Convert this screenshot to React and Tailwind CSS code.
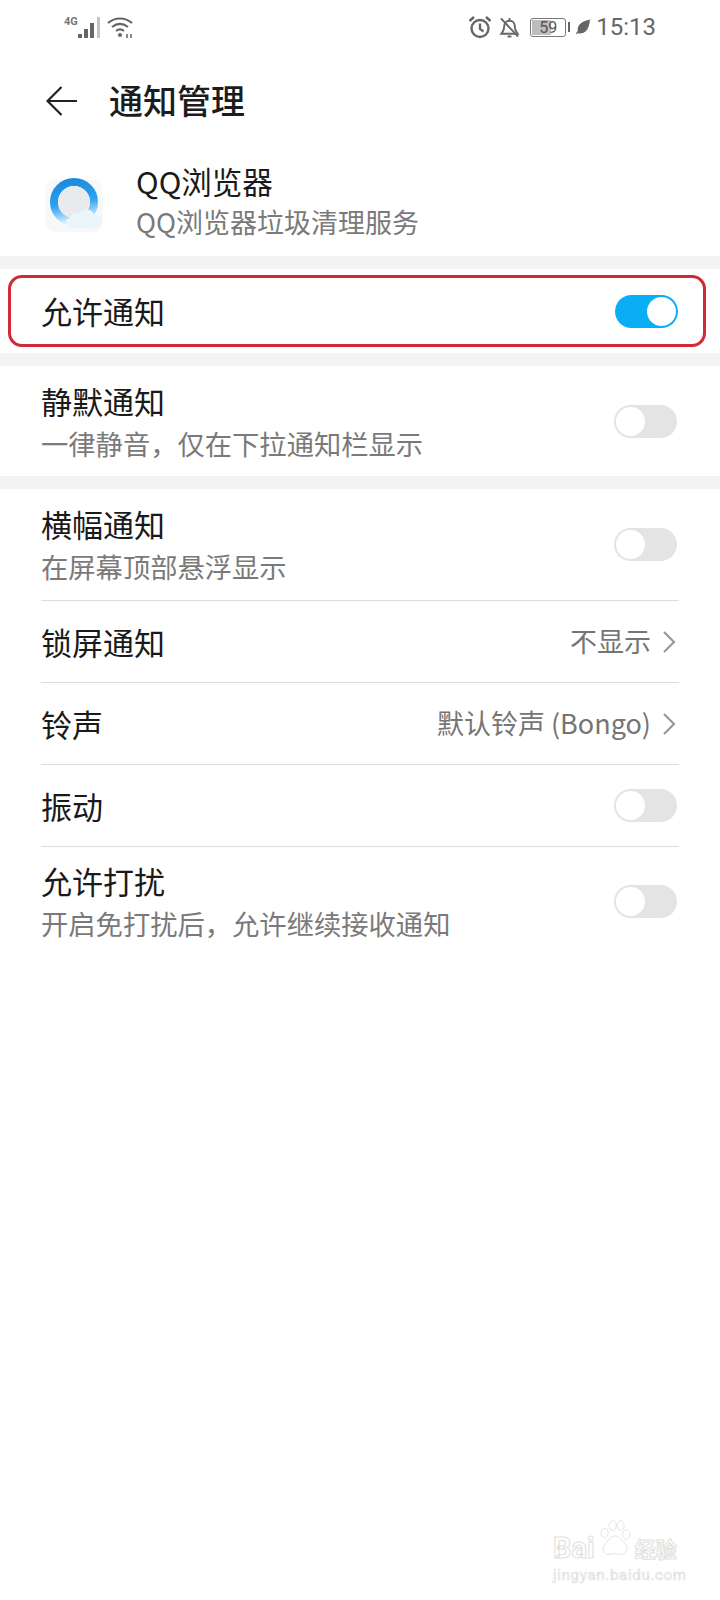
const FONT = { fontFamily: '"Noto Sans CJK SC", "Noto Sans", sans-serif' };

function Toggle({ on }) {
  return (
    <div
      className={`mr-[2px] flex h-[33px] w-[63px] shrink-0 items-center rounded-full p-[2px] ${
        on ? "justify-end bg-[#0aaef5]" : "justify-start bg-[#e4e4e4]"
      }`}
    >
      <div className="h-[29px] w-[29px] rounded-full bg-white" />
    </div>
  );
}

function Chevron() {
  return (
    <svg className="ml-[11px] mr-[3px] h-[24px] w-[14px]" viewBox="0 0 14 24" fill="none" stroke="#999999" strokeWidth="2.2">
      <path d="M2 2l10 10L2 22" />
    </svg>
  );
}

function Band() {
  return <div className="h-[13px] bg-[#f3f3f3]" />;
}

function Row({ title, sub, height, right, divider }) {
  return (
    <div className="pl-[41px] pr-[41px]">
      <div className={`flex items-center justify-between ${height} ${divider ? "border-b border-[#dcdcdc]" : ""}`}>
        <div>
          <div className="text-[31px] leading-[40px] text-[#1a1a1a]">{title}</div>
          {sub && <div className="mt-[3px] text-[27.3px] leading-[38px] text-[#7a7a7a]">{sub}</div>}
        </div>
        {right}
      </div>
    </div>
  );
}

function Value({ children }) {
  return (
    <div className="flex items-center text-[27px] text-[#757575]">
      {children}
      <Chevron />
    </div>
  );
}

function StatusBar() {
  return (
    <div className="flex h-[54px] items-center justify-between pl-[64px] pr-[64px] text-[#666666]">
      <div className="flex items-center">
        <span className="mb-[12px] text-[11px] font-bold leading-none text-[#777777]" style={{ fontFamily: "Roboto, sans-serif" }}>4G</span>
        <svg className="mt-[2px] h-[24px] w-[24px]" viewBox="0 0 24 24" fill="#666666">
          <rect x="0" y="18" width="4" height="4" />
          <rect x="6" y="13" width="4" height="9" />
          <rect x="12" y="7" width="4" height="15" />
          <rect x="19" y="1" width="3" height="21" fill="#c4c4c4" />
        </svg>
        <svg className="ml-[4px] h-[26px] w-[28px]" viewBox="0 0 28 26" fill="none" stroke="#666666" strokeWidth="2.2">
          <path d="M2 9c7-6 17-6 24 0" />
          <path d="M6 13c5-4 11-4 16 0" />
          <path d="M10 17c2.500-2 5.500-2 8 0" />
          <circle cx="14" cy="21" r="2" fill="#666666" stroke="none" />
          <path d="M21 20v4M25 20v4" strokeWidth="1.500" />
        </svg>
      </div>
      <div className="flex items-center">
        <svg className="h-[24px] w-[24px]" viewBox="0 0 24 24" fill="none" stroke="#666666" strokeWidth="2.400">
          <circle cx="12" cy="13.500" r="8.500" />
          <path d="M12 8.500v5.500l3.500 2.500M1.500 6L6 2M22.500 6L18 2" />
        </svg>
        <svg className="ml-[7px] h-[24px] w-[21px]" viewBox="0 0 22 24" fill="none" stroke="#666666" strokeWidth="2">
          <path d="M2.500 19c1.500-2 3-3 3-8 0-3 2-5.500 5.500-5.500s5.500 2.500 5.500 5.500c0 5 1.500 6 3 8z" />
          <path d="M9 22h4M11 5V2.500M2 3l18 19" />
        </svg>
        <div className="ml-[10px] flex h-[19px] w-[36px] items-center rounded-[3px] border border-[#777777] p-[1px]">
          <div className="relative h-full w-[59%] bg-[#bdbdbd]">
            <span className="absolute left-[7px] top-[-2px] text-[16px] leading-[19px] text-[#555555]" style={{ fontFamily: "Roboto, sans-serif" }}>59</span>
          </div>
        </div>
        <div className="ml-[2px] h-[10px] w-[2px] bg-[#666666]" />
        <svg className="ml-[6px] h-[16px] w-[14px]" viewBox="0 0 15 16" fill="#666666">
          <path d="M15 0C14 11 10 15 4 15c-1 0-2 0-2.500-.5L0 16l-.500-.5L2 12C1 6 6 2 15 0z" />
        </svg>
        <span className="ml-[6px] text-[24px] leading-none text-[#666666]" style={{ fontFamily: "Roboto, sans-serif" }}>15:13</span>
      </div>
    </div>
  );
}

function AppLogo() {
  return (
    <svg className="h-[62px] w-[62px]" viewBox="0 0 62 62">
      <defs>
        <linearGradient id="ring" x1="0.2" y1="0" x2="0.4" y2="1">
          <stop offset="0" stopColor="#1d8bdc" />
          <stop offset="0.55" stopColor="#2ba2f2" />
          <stop offset="1" stopColor="#d8effc" />
        </linearGradient>
      </defs>
      <rect x="2" y="8" width="58" height="52" rx="10" fill="#f8f8fb" />
      <circle cx="31" cy="30" r="20" fill="none" stroke="url(#ring)" strokeWidth="8" />
      <circle cx="31" cy="30" r="16" fill="#e7ebee" />
      <path d="M28 56c-6 0-8-9-1-10 1-5 6-6 9-4 3-7 13-6 15 1 5 0 8 3 8 6 0 4-3 7-7 7z" fill="#eaf5fc" />
    </svg>
  );
}

function Watermark() {
  return (
    <div className="absolute bottom-[17px] right-[40px] flex w-[127px] flex-col" style={{ fontFamily: "Roboto, sans-serif" }}>
      <div className="flex items-end leading-none">
        <span className="text-[29px] font-bold leading-[24px] text-transparent [-webkit-text-stroke:1px_#e0e0e0]">Bai</span>
        <svg className="h-[40px] w-[40px] shrink-0" viewBox="0 0 38 50" fill="none" stroke="#e2e2e2" strokeWidth="1.200">
          <ellipse cx="6" cy="16" rx="4.500" ry="6" />
          <ellipse cx="16" cy="7" rx="4.500" ry="6" />
          <ellipse cx="26" cy="7" rx="4.500" ry="6" />
          <ellipse cx="33" cy="18" rx="4.500" ry="6" />
          <path d="M19 20c6 0 8 6 13 10 5 5 1 14-6 13-3 0-5-1-7-1s-4 1-8 1c-7 0-9-8-5-12 4-4 7-11 13-11z" />
        </svg>
        <span className="text-[21px] font-bold leading-[24px] text-transparent [-webkit-text-stroke:1px_#e0e0e0]" style={FONT}>经验</span>
      </div>
      <div className="mt-[7px] whitespace-nowrap text-[15px] leading-[16px] tracking-[0.7px] text-transparent [-webkit-text-stroke:0.7px_#e0e0e0]">jingyan.baidu.com</div>
    </div>
  );
}

export default function App() {
  return (
    <div className="relative h-[1600px] w-[720px] overflow-hidden bg-white" style={FONT}>
      <StatusBar />

      {/* Title bar */}
      <div className="mt-[15px] flex h-[64px] items-center pl-[46px]">
        <svg className="h-[30px] w-[31px]" viewBox="0 0 31 30" fill="none" stroke="#222222" strokeWidth="2.200">
          <path d="M31 15H2M15.500 1L1.500 15l14 14" />
        </svg>
        <h1 className="ml-[32px] mt-[-2px] text-[34px] font-medium leading-none text-[#1c1c1c]">通知管理</h1>
      </div>

      {/* App info */}
      <div className="mt-[7px] flex h-[116px] items-start pl-[43px]">
        <div className="mt-[32px]">
          <AppLogo />
        </div>
        <div className="ml-[31px] flex flex-col pt-[20px]">
          <div className="text-[30.5px] leading-[42px] text-[#1a1a1a]">QQ浏览器</div>
          <div className="text-[27px] leading-[40px] text-[#7a7a7a]">QQ浏览器垃圾清理服务</div>
        </div>
      </div>

      <Band />

      {/* Highlighted row */}
      <div className="py-[6px] pl-[8px] pr-[14px]">
        <div className="flex h-[72px] items-center justify-between rounded-[14px] border-[3px] border-[#cf2a36] pl-[30px] pr-[23px]">
          <span className="text-[31px] text-[#1a1a1a]">允许通知</span>
          <Toggle on />
        </div>
      </div>

      <Band />
      <Row title="静默通知" sub="一律静音，仅在下拉通知栏显示" height="h-[110px]" right={<Toggle />} />
      <Band />
      <Row title="横幅通知" sub="在屏幕顶部悬浮显示" height="h-[112px]" right={<Toggle />} divider />
      <Row title="锁屏通知" height="h-[82px]" right={<Value>不显示</Value>} divider />
      <Row title="铃声" height="h-[82px]" right={<Value>默认铃声 (Bongo)</Value>} divider />
      <Row title="振动" height="h-[82px]" right={<Toggle />} divider />
      <Row title="允许打扰" sub="开启免打扰后，允许继续接收通知" height="h-[109px]" right={<Toggle />} />

      <Watermark />
    </div>
  );
}
